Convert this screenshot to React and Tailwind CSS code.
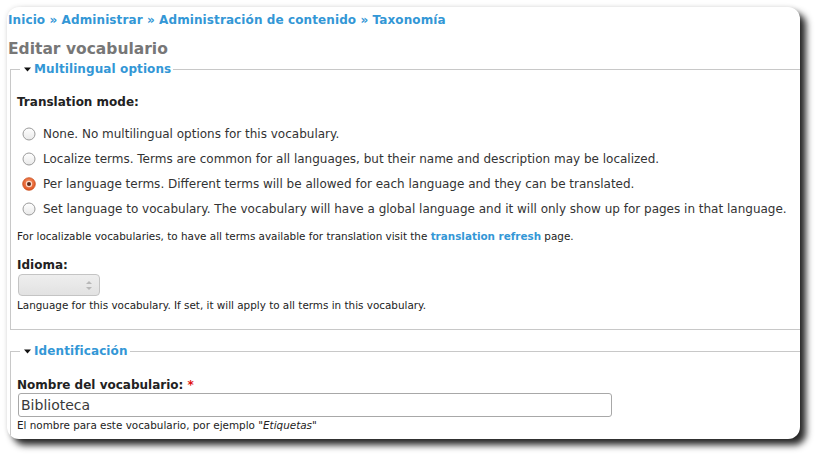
import React from "react";

const Radio = ({ checked }) =>
  checked ? (
    <svg width="14" height="14" viewBox="0 0 14 14" className="shrink-0">
      <defs>
        <radialGradient id="rg" cx="50%" cy="40%" r="60%">
          <stop offset="0%" stopColor="#f79a6e" />
          <stop offset="100%" stopColor="#e0521f" />
        </radialGradient>
      </defs>
      <circle cx="7" cy="7" r="6.3" fill="url(#rg)" stroke="#c9501f" strokeWidth="0.8" />
      <circle cx="7" cy="7" r="3.2" fill="#fcd9c8" />
      <circle cx="7" cy="7" r="2" fill="#5b2b1c" />
    </svg>
  ) : (
    <svg width="14" height="14" viewBox="0 0 14 14" className="shrink-0">
      <defs>
        <linearGradient id="ug" x1="0" y1="0" x2="0" y2="1">
          <stop offset="0%" stopColor="#ffffff" />
          <stop offset="100%" stopColor="#e9e9e9" />
        </linearGradient>
      </defs>
      <circle cx="7" cy="7" r="6" fill="url(#ug)" stroke="#9a9a9a" strokeWidth="1" />
    </svg>
  );

const Tri = () => (
  <svg width="7" height="5" viewBox="0 0 7 5" className="shrink-0 mr-[3px]">
    <polygon points="0,0.5 7,0.5 3.5,4.5" fill="#111" />
  </svg>
);

const options = [
  ["None. No multilingual options for this vocabulary.", false],
  ["Localize terms. Terms are common for all languages, but their name and description may be localized.", false],
  ["Per language terms. Different terms will be allowed for each language and they can be translated.", true],
  ["Set language to vocabulary. The vocabulary will have a global language and it will only show up for pages in that language.", false],
];

export default function App() {
  return (
    <div
      className="w-[823px] h-[462px] bg-white overflow-hidden pt-[7px] pl-[7px]"
      style={{ fontFamily: '"DejaVu Sans", Verdana, sans-serif' }}
    >
      <div className="w-[793px] h-[432px] bg-white rounded-[12px] overflow-hidden shadow-[6px_6px_7px_rgba(0,0,0,0.85),0_0_5px_rgba(0,0,0,0.12)] pl-[1px]">
        <div className="pt-[6px] text-[12px] leading-[14px] font-bold tracking-[0.1px] text-[#3397d6] whitespace-nowrap">
          Inicio » Administrar » Administración de contenido » Taxonomía
        </div>
        <h1 className="mt-[12px] text-[15.5px] leading-[20px] font-bold text-[#777]">Editar vocabulario</h1>

        <fieldset className="mt-[2px] ml-[2px] w-[800px] border border-[#c8c8c8] pb-[17px]">
          <legend className="ml-[9px] pl-[4px] pr-[2px] flex items-center text-[12px] leading-[16px] font-bold tracking-[0.1px] text-[#3397d6]">
            <Tri />
            Multilingual options
          </legend>
          <div className="pl-[6px] text-[#333]">
            <div className="mt-[17px] text-[12px] leading-[16px] font-bold text-[#222]">Translation mode:</div>
            <div className="mt-[11px]">
              {options.map(([t, c], i) => (
                <div key={i} className="h-[25px] flex items-center ml-[5px] text-[12px] whitespace-nowrap">
                  <Radio checked={c} />
                  <span className="ml-[7px]">{t}</span>
                </div>
              ))}
            </div>
            <div className="mt-[8px] text-[10.4px] leading-[14px] text-[#222] whitespace-nowrap">
              For localizable vocabularies, to have all terms available for translation visit the{" "}
              <span className="font-bold text-[#3397d6]">translation refresh</span> page.
            </div>
            <div className="mt-[14px] text-[12px] leading-[16px] font-bold text-[#222]">Idioma:</div>
            <div className="mt-[1px] ml-[1px] w-[82px] h-[22px] rounded-[4px] border border-[#c4c4c4] bg-gradient-to-b from-[#eeeeee] to-[#e2e2e2] flex justify-end items-center pr-[7px]">
              <svg width="6" height="11" viewBox="0 0 6 11">
                <polygon points="0,4 6,4 3,1" fill="#b8b8b8" />
                <polygon points="0,7 6,7 3,10" fill="#b8b8b8" />
              </svg>
            </div>
            <div className="mt-[2px] text-[10.4px] leading-[14px] text-[#222] whitespace-nowrap">
              Language for this vocabulary. If set, it will apply to all terms in this vocabulary.
            </div>
          </div>
        </fieldset>

        <fieldset className="mt-[13px] ml-[2px] w-[800px] h-[200px] border border-[#c8c8c8]">
          <legend className="ml-[9px] pl-[4px] pr-[2px] flex items-center text-[12px] leading-[16px] font-bold tracking-[0.1px] text-[#3397d6]">
            <Tri />
            Identificación
          </legend>
          <div className="pl-[6px]">
            <div className="mt-[18px] text-[12px] leading-[16px] font-bold text-[#222]">
              Nombre del vocabulario: <span className="text-[#e01010]">*</span>
            </div>
            <div className="ml-[1px] w-[594px] h-[24px] rounded-[3px] border border-[#a8a8a8] flex items-center pl-[2px] text-[14px] text-[#3a3a3a]">
              Biblioteca
            </div>
            <div className="mt-[1px] text-[10.4px] leading-[14px] text-[#222] whitespace-nowrap">
              El nombre para este vocabulario, por ejemplo <span className="italic">"Etiquetas"</span>
            </div>
          </div>
        </fieldset>
      </div>
    </div>
  );
}
